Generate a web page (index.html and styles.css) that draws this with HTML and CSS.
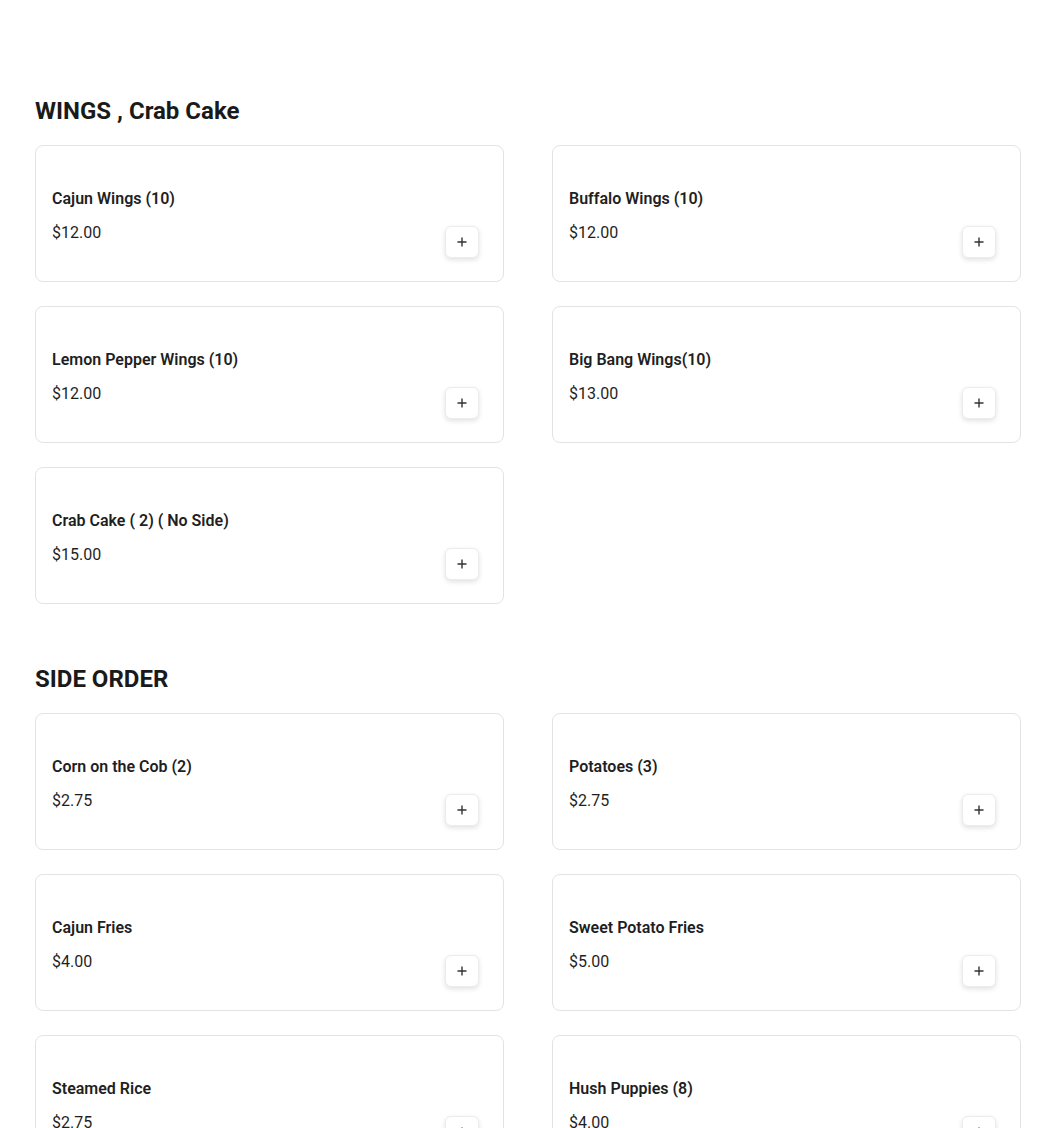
FILE: index.html
```html
<!DOCTYPE html>
<html>
<head>
<meta charset="utf-8">
<link rel="stylesheet" href="styles.css">
</head>
<body>
<main class="menu">
  <section class="section">
    <h2 class="section-title">WINGS , Crab Cake</h2>
    <div class="grid">
      <div class="card"><div class="info"><div class="name">Cajun Wings (10)</div><div class="price">$12.00</div></div><button class="add"><svg viewBox="0 0 12 12" width="12" height="12"><path d="M6 1.5v9M1.5 6h9" stroke="#333" stroke-width="1.4"/></svg></button></div>
      <div class="card"><div class="info"><div class="name">Buffalo Wings (10)</div><div class="price">$12.00</div></div><button class="add"><svg viewBox="0 0 12 12" width="12" height="12"><path d="M6 1.5v9M1.5 6h9" stroke="#333" stroke-width="1.4"/></svg></button></div>
      <div class="card"><div class="info"><div class="name">Lemon Pepper Wings (10)</div><div class="price">$12.00</div></div><button class="add"><svg viewBox="0 0 12 12" width="12" height="12"><path d="M6 1.5v9M1.5 6h9" stroke="#333" stroke-width="1.4"/></svg></button></div>
      <div class="card"><div class="info"><div class="name">Big Bang Wings(10)</div><div class="price">$13.00</div></div><button class="add"><svg viewBox="0 0 12 12" width="12" height="12"><path d="M6 1.5v9M1.5 6h9" stroke="#333" stroke-width="1.4"/></svg></button></div>
      <div class="card"><div class="info"><div class="name">Crab Cake ( 2) ( No Side)</div><div class="price">$15.00</div></div><button class="add"><svg viewBox="0 0 12 12" width="12" height="12"><path d="M6 1.5v9M1.5 6h9" stroke="#333" stroke-width="1.4"/></svg></button></div>
    </div>
  </section>
  <section class="section">
    <h2 class="section-title">SIDE ORDER</h2>
    <div class="grid">
      <div class="card"><div class="info"><div class="name">Corn on the Cob (2)</div><div class="price">$2.75</div></div><button class="add"><svg viewBox="0 0 12 12" width="12" height="12"><path d="M6 1.5v9M1.5 6h9" stroke="#333" stroke-width="1.4"/></svg></button></div>
      <div class="card"><div class="info"><div class="name">Potatoes (3)</div><div class="price">$2.75</div></div><button class="add"><svg viewBox="0 0 12 12" width="12" height="12"><path d="M6 1.5v9M1.5 6h9" stroke="#333" stroke-width="1.4"/></svg></button></div>
      <div class="card"><div class="info"><div class="name">Cajun Fries</div><div class="price">$4.00</div></div><button class="add"><svg viewBox="0 0 12 12" width="12" height="12"><path d="M6 1.5v9M1.5 6h9" stroke="#333" stroke-width="1.4"/></svg></button></div>
      <div class="card"><div class="info"><div class="name">Sweet Potato Fries</div><div class="price">$5.00</div></div><button class="add"><svg viewBox="0 0 12 12" width="12" height="12"><path d="M6 1.5v9M1.5 6h9" stroke="#333" stroke-width="1.4"/></svg></button></div>
      <div class="card"><div class="info"><div class="name">Steamed Rice</div><div class="price">$2.75</div></div><button class="add"><svg viewBox="0 0 12 12" width="12" height="12"><path d="M6 1.5v9M1.5 6h9" stroke="#333" stroke-width="1.4"/></svg></button></div>
      <div class="card"><div class="info"><div class="name">Hush Puppies (8)</div><div class="price">$4.00</div></div><button class="add"><svg viewBox="0 0 12 12" width="12" height="12"><path d="M6 1.5v9M1.5 6h9" stroke="#333" stroke-width="1.4"/></svg></button></div>
    </div>
  </section>
</main>
</body>
</html>
```

FILE: styles.css
```css
html, body {
  margin: 0;
  padding: 0;
  background: #fff;
  font-family: Roboto, "Liberation Sans", Arial, sans-serif;
  color: #1f1f1f;
}
.menu {
  padding: 95px 29px 40px 35px;
  display: flex;
  flex-direction: column;
  gap: 59px;
}
.section-title {
  margin: 0 0 18px 0;
  font-size: 24px;
  line-height: 32px;
  font-weight: 700;
  color: #1a1a1a;
}
.grid {
  display: grid;
  grid-template-columns: 1fr 1fr;
  column-gap: 48px;
  row-gap: 24px;
}
.card {
  box-sizing: border-box;
  height: 137px;
  border: 1px solid #e3e3e3;
  border-radius: 8px;
  padding: 41px 24px 23px 16px;
  display: flex;
  justify-content: space-between;
  align-items: flex-start;
}
.info {
  display: flex;
  flex-direction: column;
  gap: 10px;
}
.name {
  font-size: 16px;
  line-height: 24px;
  font-weight: 600;
  color: #1f1f1f;
}
.price {
  font-size: 16px;
  line-height: 24px;
  font-weight: 400;
  color: #1f1f1f;
}
.add {
  align-self: flex-end;
  width: 34px;
  height: 32px;
  padding: 0;
  border: 1px solid #ececec;
  border-radius: 6px;
  background: #fff;
  box-shadow: 0 2px 5px rgba(0, 0, 0, 0.12);
  display: flex;
  align-items: center;
  justify-content: center;
  cursor: pointer;
}
.add svg {
  display: block;
}
```
